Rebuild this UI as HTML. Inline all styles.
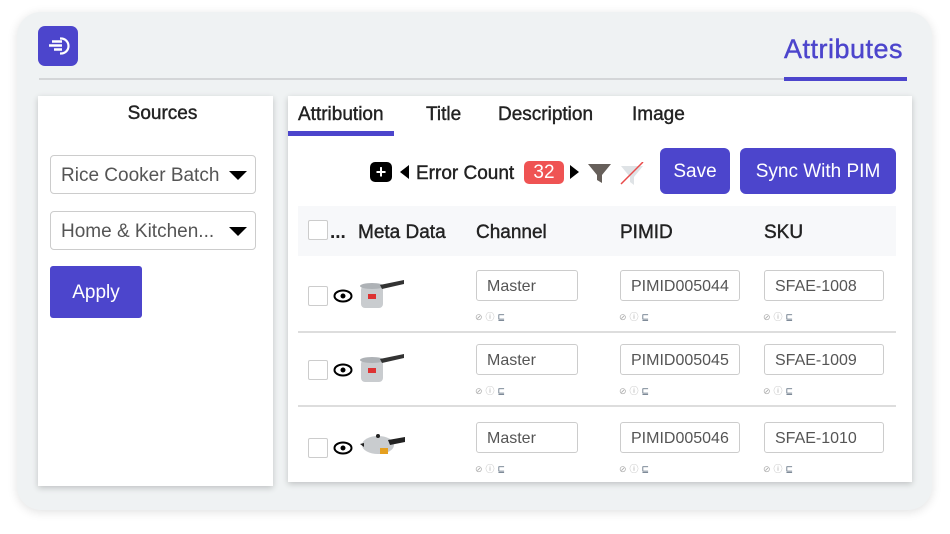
<!DOCTYPE html>
<html><head><meta charset="utf-8"><style>
*{box-sizing:border-box;margin:0;padding:0}
body{width:950px;height:534px;background:#fff;font-family:"Liberation Sans",sans-serif;position:relative;overflow:hidden;color:#222}
.a{position:absolute}
.m{-webkit-text-stroke:0.4px currentColor}
.card{left:17px;top:12px;width:915px;height:498px;background:#eff2f3;border-radius:24px;box-shadow:0 2px 10px rgba(0,0,0,.12)}
.panel{background:#fff;box-shadow:0 2px 6px rgba(0,0,0,.2)}
.sel{border:1.5px solid #ccc;border-radius:4px;background:#fff;font-size:19px;color:#555;padding:9px 0 0 10px}
.sel:after{content:"";position:absolute;right:8px;top:15px;border-left:9px solid transparent;border-right:9px solid transparent;border-top:9px solid #000}
.btn{background:#4c45cc;color:#fff;border-radius:6px;text-align:center;font-size:19px}
.tab{font-size:19px;top:104px;color:#222}
.inp{border:1.5px solid #ccc;border-radius:3px;height:31px;font-size:16px;color:#555;padding:7px 0 0 10px}
.ic{font-size:9px;color:#aaa;letter-spacing:3px}
.cb{width:20px;height:20px;border:1.5px solid #ccc;border-radius:2px;background:#fff}
.hd{font-size:19px;top:222px;color:#222}
.hr{height:2px;background:#ddd;left:298px;width:598px}
</style></head><body>
<div class="a card"></div>
<div class="a" style="left:38px;top:26px;width:40px;height:40px;background:#4c45cc;border-radius:7px">
<svg width="40" height="40" viewBox="0 0 40 40"><path d="M22 12.5h1a7.5 7.5 0 0 1 0 15h-1" stroke="#fff" stroke-width="2.2" fill="none"/><path d="M11 19.5h13M14 15.5h10M16 23.5h8" stroke="#fff" stroke-width="2.4"/></svg></div>
<div class="a" style="left:39px;top:78px;width:868px;height:2px;background:#d4d6d8"></div>
<div class="a m" style="left:784px;top:34px;font-size:27px;color:#4c45cc;letter-spacing:0.5px">Attributes</div>
<div class="a" style="left:784px;top:77px;width:123px;height:4px;background:#4c45cc"></div>

<div class="a panel" style="left:38px;top:96px;width:235px;height:390px"></div>
<div class="a m" style="left:38px;top:103px;width:249px;text-align:center;font-size:19px">Sources</div>
<div class="a sel" style="left:50px;top:155px;width:206px;height:39px">Rice Cooker Batch</div>
<div class="a sel" style="left:50px;top:211px;width:206px;height:39px">Home &amp; Kitchen...</div>
<div class="a btn" style="left:50px;top:266px;width:92px;height:52px;line-height:54px;border-radius:3px">Apply</div>

<div class="a panel" style="left:288px;top:96px;width:624px;height:386px"></div>
<div class="a tab m" style="left:298px">Attribution</div>
<div class="a tab m" style="left:426px">Title</div>
<div class="a tab m" style="left:498px">Description</div>
<div class="a tab m" style="left:632px">Image</div>
<div class="a" style="left:288px;top:131px;width:106px;height:5px;background:#4c45cc"></div>

<div class="a" style="left:370px;top:162px;width:22px;height:20px;background:#000;border-radius:5px;color:#fff;font-weight:bold;font-size:18px;line-height:20px;text-align:center">+</div>
<div class="a" style="left:400px;top:165px;border-top:7px solid transparent;border-bottom:7px solid transparent;border-right:9px solid #000"></div>
<div class="a m" style="left:416px;top:163px;font-size:19px">Error Count</div>
<div class="a" style="left:524px;top:161px;width:40px;height:23px;background:#ef5353;border-radius:5px;color:#fff;font-size:19px;text-align:center;line-height:24px">32</div>
<div class="a" style="left:570px;top:165px;border-top:7px solid transparent;border-bottom:7px solid transparent;border-left:9px solid #000"></div>
<svg class="a" style="left:588px;top:162px" width="60" height="24"><path d="M0 2h23l-9 11v8l-5-3v-5z" fill="#665f5a"/><path d="M33 4h22l-9 11v8l-4-3v-5z" fill="#dfe3e6"/><path d="M33 22L55 0" stroke="#e84a4a" stroke-width="1.5"/></svg>
<div class="a btn" style="left:660px;top:148px;width:70px;height:46px;line-height:48px">Save</div>
<div class="a btn" style="left:740px;top:148px;width:156px;height:46px;line-height:48px">Sync With PIM</div>

<div class="a" style="left:298px;top:206px;width:598px;height:50px;background:#f7f8fa"></div>
<div class="a cb" style="left:308px;top:220px"></div>
<div class="a" style="left:330px;top:222px;font-size:19px;font-weight:bold">...</div>
<div class="a hd m" style="left:358px">Meta Data</div>
<div class="a hd m" style="left:476px">Channel</div>
<div class="a hd m" style="left:620px">PIMID</div>
<div class="a hd m" style="left:764px">SKU</div>

<div class="a cb" style="left:308px;top:286px"></div>
<div class="a cb" style="left:308px;top:360px"></div>
<div class="a cb" style="left:308px;top:438px"></div>
<svg class="a" style="left:333px;top:288px" width="20" height="16"><ellipse cx="10" cy="8" rx="8.5" ry="5.5" stroke="#000" stroke-width="2" fill="none"/><circle cx="10" cy="8" r="2.5" fill="#000"/></svg>
<svg class="a" style="left:333px;top:362px" width="20" height="16"><ellipse cx="10" cy="8" rx="8.5" ry="5.5" stroke="#000" stroke-width="2" fill="none"/><circle cx="10" cy="8" r="2.5" fill="#000"/></svg>
<svg class="a" style="left:333px;top:440px" width="20" height="16"><ellipse cx="10" cy="8" rx="8.5" ry="5.5" stroke="#000" stroke-width="2" fill="none"/><circle cx="10" cy="8" r="2.5" fill="#000"/></svg>
<svg class="a" style="left:358px;top:278px" width="48" height="32"><rect x="3" y="8" width="22" height="22" rx="4" fill="#c9cccf"/><ellipse cx="14" cy="8" rx="12" ry="3" fill="#aeb2b6"/><rect x="10" y="16" width="8" height="5" fill="#d33"/><path d="M22 7l24-5v4l-22 5z" fill="#333"/></svg>
<svg class="a" style="left:358px;top:352px" width="48" height="32"><rect x="3" y="8" width="22" height="22" rx="4" fill="#c9cccf"/><ellipse cx="14" cy="8" rx="12" ry="3" fill="#aeb2b6"/><rect x="10" y="16" width="8" height="5" fill="#d33"/><path d="M22 7l24-5v4l-22 5z" fill="#333"/></svg>
<svg class="a" style="left:358px;top:432px" width="48" height="28"><ellipse cx="20" cy="13" rx="16" ry="9" fill="#c9cccf"/><circle cx="20" cy="4" r="2" fill="#222"/><rect x="22" y="16" width="8" height="6" fill="#e5a020"/><path d="M30 8l17-3v5l-15 3z" fill="#222"/><path d="M2 12l4-1v4z" fill="#222"/></svg>

<div class="a hr" style="top:331px"></div>
<div class="a hr" style="top:405px"></div>

<div class="a inp" style="left:476px;top:270px;width:102px">Master</div>
<div class="a inp" style="left:620px;top:270px;width:120px">PIMID005044</div>
<div class="a inp" style="left:764px;top:270px;width:120px">SFAE-1008</div>
<div class="a inp" style="left:476px;top:344px;width:102px">Master</div>
<div class="a inp" style="left:620px;top:344px;width:120px">PIMID005045</div>
<div class="a inp" style="left:764px;top:344px;width:120px">SFAE-1009</div>
<div class="a inp" style="left:476px;top:422px;width:102px">Master</div>
<div class="a inp" style="left:620px;top:422px;width:120px">PIMID005046</div>
<div class="a inp" style="left:764px;top:422px;width:120px">SFAE-1010</div>

<div class="a ic" style="left:475px;top:310px">⊘ⓘ<span style="color:#567">⊑</span></div>
<div class="a ic" style="left:619px;top:310px">⊘ⓘ<span style="color:#567">⊑</span></div>
<div class="a ic" style="left:763px;top:310px">⊘ⓘ<span style="color:#567">⊑</span></div>
<div class="a ic" style="left:475px;top:384px">⊘ⓘ<span style="color:#567">⊑</span></div>
<div class="a ic" style="left:619px;top:384px">⊘ⓘ<span style="color:#567">⊑</span></div>
<div class="a ic" style="left:763px;top:384px">⊘ⓘ<span style="color:#567">⊑</span></div>
<div class="a ic" style="left:475px;top:462px">⊘ⓘ<span style="color:#567">⊑</span></div>
<div class="a ic" style="left:619px;top:462px">⊘ⓘ<span style="color:#567">⊑</span></div>
<div class="a ic" style="left:763px;top:462px">⊘ⓘ<span style="color:#567">⊑</span></div>
</body></html>
